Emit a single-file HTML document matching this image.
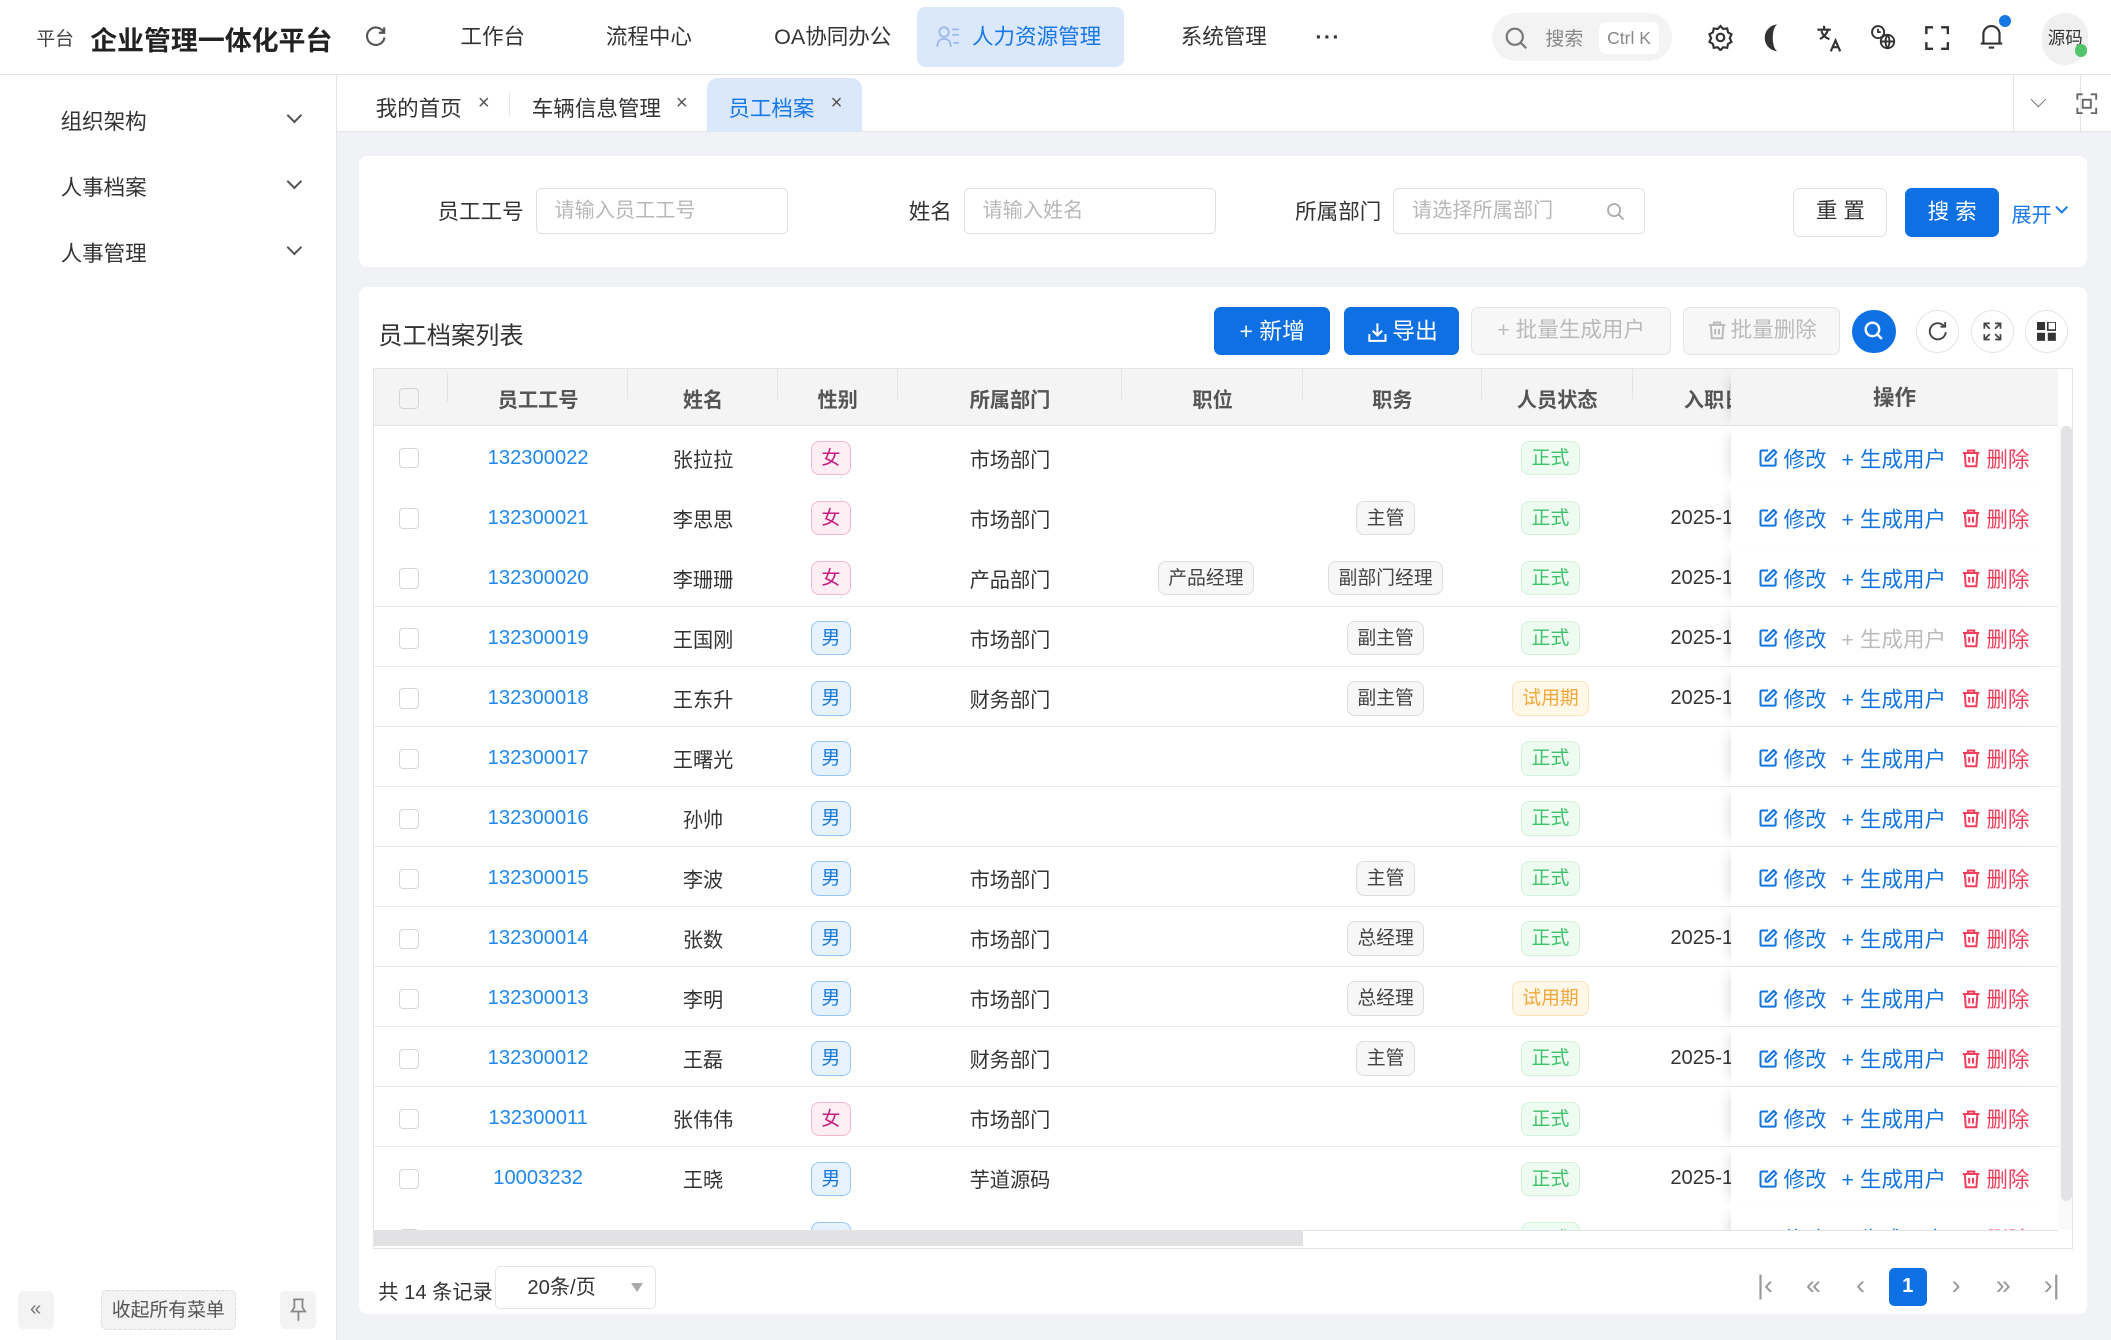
<!DOCTYPE html>
<html><head><meta charset="utf-8"><style>
*{box-sizing:border-box;margin:0;padding:0}
html,body{width:2111px;height:1340px;overflow:hidden;background:#fff}
#w{zoom:1.34630;width:1568px;height:995px;position:relative;font-family:"Liberation Sans","Noto Sans CJK SC",sans-serif;color:#333;font-size:15px;background:#f0f2f5}
.a{position:absolute}
.hdr{left:0;top:0;width:1568px;height:56px;background:#fff;border-bottom:1px solid #e4e4e4}
.side{left:0;top:56px;width:250px;height:939px;background:#fff;border-right:1px solid #e4e4e4}
.tabs{left:250px;top:56px;width:1318px;height:42px;background:#fff;border-bottom:1px solid #e6e6e6}
.nav{top:0;height:56px;line-height:56px;font-size:16px;color:#333}
.menu{left:45px;font-size:16px;color:#333}
.chev{position:absolute;left:215px;width:8px;height:8px;border-right:1.5px solid #555;border-bottom:1.5px solid #555;transform:rotate(45deg)}
.card{background:#fff;border-radius:6px}
.inp{height:34px;border:1px solid #dcdfe6;border-radius:4px;color:#b8b8b8;font-size:15px;line-height:32px;padding-left:13px}
.lbl{font-size:16px;color:#333;line-height:34px}
.btn{height:36px;border-radius:5px;line-height:36px;text-align:center;font-size:16px}
.row{position:absolute;left:0;width:1251px;height:45px;border-bottom:1px solid #e8e8e8;display:flex;align-items:center;background:#fff;padding-top:3px}
.c{flex:none;text-align:center}
.c0{width:55px;padding-right:3px}.c1{width:134px;color:#1e88ef}.c2{width:111px}.c3{width:89px;padding-right:10px}.c4{width:167px}.c5{width:134px;padding-right:10px}.c6{width:133px;padding-right:10px}.c7{width:112px;padding-right:10px}.c8{width:73px;text-align:left;padding-left:28px;overflow:hidden;white-space:nowrap}
.cb{display:inline-block;width:15px;height:15px;border:1px solid #d6d6d6;border-radius:3px;vertical-align:middle}
.tg{display:inline-block;font-size:14px;line-height:24px;padding:0 7px;border-radius:6px;border:1px solid #ddd;background:#f7f7f7;color:#444}
.f{border-color:#f8b7d1;background:#fdeef4;color:#c41d7f}
.m{border-color:#96c7f7;background:#e6f3ff;color:#1677d8}
.z{border-color:#d3f2dc;background:#eefbf1;color:#3fc26a}
.s{border-color:#fbe4b8;background:#fff8e8;color:#f1a73a}
.ops{position:absolute;left:1008px;top:0;width:243px;height:100%;display:flex;align-items:center;padding-left:20px;padding-top:3px;background:#fff;box-shadow:-8px 0 8px -6px rgba(0,0,0,.12);font-size:16px}
.ops span{margin-right:11px;color:#1474e0;display:flex;align-items:center}
.ops svg{margin-right:4px}
.ops .d{color:#f0405e;margin-right:0}
.ops .g{color:#bbb}
.hc{font-weight:bold;color:#555;position:relative}
.hc:after{content:"";position:absolute;right:0;top:-11px;height:22px;border-right:1px solid #e3e3e3}
.ib{width:32px;height:32px;border-radius:50%;border:1px solid #e4e4e4;background:#fff}
.pg{top:943px;font-size:20px;color:#999;width:24px;text-align:center}
</style></head><body>
<svg width="0" height="0" style="position:absolute">
<symbol id="ed" viewBox="0 0 16 16"><path d="M8 2H3a1 1 0 0 0-1 1v10a1 1 0 0 0 1 1h10a1 1 0 0 0 1-1V8" fill="none" stroke="currentColor" stroke-width="1.6"/><path d="M12.5 1.5l2 2L8 10H6V8z" fill="none" stroke="currentColor" stroke-width="1.6" stroke-linejoin="round"/></symbol>
<symbol id="tr" viewBox="0 0 16 16"><path d="M1.5 4h13M5.5 4V2h5v2M3 4l.8 10.5h8.4L13 4M6.5 7v4.5M9.5 7v4.5" fill="none" stroke="currentColor" stroke-width="1.6"/></symbol>
</svg>
<div id="w">
<!-- header -->
<div class="a hdr">
 <div class="a" style="left:27px;top:18px;font-size:14px;color:#444">平台</div>
 <div class="a" style="left:67px;top:14px;font-size:20px;font-weight:bold;color:#222">企业管理一体化平台</div>
 <svg class="a" style="left:270px;top:18px" width="18" height="18" viewBox="0 0 18 18" fill="none" stroke="#555" stroke-width="1.6"><path d="M14.5 6A6.5 6.5 0 1 0 15.2 10"/><path d="M15 2.5V6.5H11"/></svg>
 <div class="a nav" style="left:342px">工作台</div>
 <div class="a nav" style="left:450px">流程中心</div>
 <div class="a nav" style="left:575px">OA协同办公</div>
 <div class="a" style="left:681px;top:5px;width:154px;height:45px;background:#dbe8fb;border-radius:6px"></div>
 <svg class="a" style="left:695px;top:18px" width="18" height="20" viewBox="0 0 18 20" fill="none" stroke="#9bbbe6" stroke-width="1.4"><circle cx="6" cy="6" r="3.5"/><path d="M1 17c0-4 2-6 5-6s5 2 5 6"/><path d="M12 4h5M12 8h5M13 14h4"/></svg>
 <div class="a nav" style="left:722px;color:#1677e6">人力资源管理</div>
 <div class="a nav" style="left:877px">系统管理</div>
 <div class="a nav" style="left:977px;font-weight:bold;letter-spacing:1px">···</div>
 <div class="a" style="left:1108px;top:10px;width:134px;height:35px;border-radius:18px;background:#f3f3f3"></div>
 <svg class="a" style="left:1117px;top:19px" width="18" height="18" viewBox="0 0 18 18" fill="none" stroke="#777" stroke-width="1.6"><circle cx="8" cy="8" r="6"/><path d="M12.5 12.5L16.5 16.5"/></svg>
 <div class="a" style="left:1148px;top:18px;font-size:14px;color:#888">搜索</div>
 <div class="a" style="left:1188px;top:16px;width:44px;height:24px;background:#fff;border-radius:5px;font-size:13px;color:#888;text-align:center;line-height:24px">Ctrl K</div>
 <svg class="a" style="left:1268px;top:18px" width="20" height="20" viewBox="0 0 20 20" fill="none" stroke="#333" stroke-width="1.6"><path d="M10 1.5l2 2.2 3-.4.6 2.9 2.6 1.5-1.3 2.8 1.3 2.8-2.6 1.5-.6 2.9-3-.4-2 2.2-2-2.2-3 .4-.6-2.9-2.6-1.5 1.3-2.8L1.8 7.7l2.6-1.5.6-2.9 3 .4z"/><circle cx="10" cy="10" r="2.8"/></svg>
 <svg class="a" style="left:1309px;top:17px" width="18" height="22" viewBox="0 0 18 22"><path d="M12 1A10 10 0 0 0 12 21A4 10 0 0 1 12 1Z" fill="#333"/></svg>
 <svg class="a" style="left:1349px;top:17px" width="20" height="22" viewBox="0 0 20 22" fill="none" stroke="#333" stroke-width="1.6"><path d="M1 5h10M6 2v3M3 12c3-2 5-4 6-7M4 6c1 3 3 5 6 6"/><path d="M11 21l3.5-8 3.5 8M12.3 18h4.4"/></svg>
 <svg class="a" style="left:1389px;top:18px" width="20" height="20" viewBox="0 0 20 20" fill="none" stroke="#333" stroke-width="1.4"><circle cx="6" cy="6" r="4.5"/><path d="M6 3.5V6H8"/><circle cx="13" cy="13" r="5"/><path d="M8 13h10M13 8c-2 3-2 7 0 10M13 8c2 3 2 7 0 10"/></svg>
 <svg class="a" style="left:1430px;top:19px" width="18" height="18" viewBox="0 0 18 18" fill="none" stroke="#333" stroke-width="1.8"><path d="M1 6V1h5M12 1h5v5M17 12v5h-5M6 17H1v-5"/></svg>
 <svg class="a" style="left:1469px;top:16px" width="20" height="22" viewBox="0 0 20 22" fill="none" stroke="#333" stroke-width="1.6"><path d="M4 16V9a6 6 0 0 1 12 0v7H2h16"/><path d="M8 19h4"/></svg>
 <div class="a" style="left:1485px;top:11px;width:9px;height:9px;border-radius:50%;background:#1677e6"></div>
 <div class="a" style="left:1517px;top:10px;width:34px;height:38px;border-radius:17px;background:#f0f0f0;font-size:13px;line-height:38px;text-align:center;color:#333">源码</div>
 <div class="a" style="left:1541px;top:33px;width:9px;height:9px;border-radius:50%;background:#52c46c"></div>
</div>
<!-- sidebar -->
<div class="a side">
 <div class="a menu" style="top:22px">组织架构</div><div class="chev" style="top:26px"></div>
 <div class="a menu" style="top:71px">人事档案</div><div class="chev" style="top:75px"></div>
 <div class="a menu" style="top:120px">人事管理</div><div class="chev" style="top:124px"></div>
 <div class="a" style="left:13px;top:903px;width:27px;height:28px;border-radius:4px;background:#f3f3f3;color:#777;text-align:center;line-height:27px;font-size:15px">«</div>
 <div class="a" style="left:75px;top:902px;width:100px;height:30px;border-radius:4px;background:#f3f3f3;border:1px dashed #ddd;color:#555;text-align:center;line-height:28px;font-size:14px">收起所有菜单</div>
 <div class="a" style="left:208px;top:903px;width:27px;height:28px;border-radius:4px;background:#f3f3f3"></div>
 <svg class="a" style="left:215px;top:908px" width="14" height="18" viewBox="0 0 14 18" fill="none" stroke="#888" stroke-width="1.3"><path d="M3 1h8M4 1v6L2 10h10L10 7V1M7 10v7"/></svg>
</div>
<!-- tabs -->
<div class="a tabs">
 <div class="a" style="left:29px;top:12px;font-size:16px">我的首页</div><div class="a" style="left:105px;top:12px;font-size:15px;color:#555">×</div>
 <div class="a" style="left:128px;top:13px;height:17px;border-left:1px solid #e4e4e4"></div>
 <div class="a" style="left:145px;top:12px;font-size:16px">车辆信息管理</div><div class="a" style="left:252px;top:12px;font-size:15px;color:#555">×</div>
 <div class="a" style="left:275px;top:2px;width:115px;height:40px;background:#dbe8fb;border-radius:8px 8px 0 0"></div>
 <div class="a" style="left:291px;top:12px;font-size:16px;color:#1677e6">员工档案</div><div class="a" style="left:367px;top:12px;font-size:15px;color:#555">×</div>
 <div class="a" style="left:1245px;top:0;height:41px;border-left:1px solid #e4e4e4"></div>
 <div class="a" style="left:1295px;top:0;height:41px;border-left:1px solid #e4e4e4"></div>
 <div class="a" style="left:1260px;top:14px;width:8px;height:8px;border-right:1.3px solid #777;border-bottom:1.3px solid #777;transform:rotate(45deg)"></div>
 <svg class="a" style="left:1292px;top:13px" width="16" height="16" viewBox="0 0 16 16" fill="none" stroke="#666" stroke-width="1.4"><path d="M1 5V1h4M11 1h4v4M15 11v4h-4M5 15H1v-4"/><rect x="5" y="5" width="6" height="6"/></svg>
</div>
<!-- search card -->
<div class="a card" style="left:267px;top:116px;width:1283px;height:82px">
 <div class="a lbl" style="left:58px;top:25px">员工工号</div>
 <div class="a inp" style="left:131px;top:24px;width:187px;line-height:34px">请输入员工工号</div>
 <div class="a lbl" style="left:408px;top:25px">姓名</div>
 <div class="a inp" style="left:449px;top:24px;width:187px;line-height:34px">请输入姓名</div>
 <div class="a lbl" style="left:695px;top:25px">所属部门</div>
 <div class="a inp" style="left:768px;top:24px;width:187px;line-height:34px">请选择所属部门</div>
 <svg class="a" style="left:926px;top:34px" width="14" height="14" viewBox="0 0 14 14" fill="none" stroke="#aaa" stroke-width="1.3"><circle cx="6" cy="6" r="4.5"/><path d="M9.5 9.5L13 13"/></svg>
 <div class="a btn" style="left:1065px;top:24px;width:70px;border:1px solid #dcdfe6;color:#333;line-height:34px">重 置</div>
 <div class="a btn" style="left:1148px;top:24px;width:70px;background:#0f70e3;color:#fff">搜 索</div>
 <div class="a" style="left:1227px;top:32px;font-size:15px;color:#1677e6">展开</div>
 <div class="a" style="left:1261px;top:35px;width:7px;height:7px;border-right:1.5px solid #1677e6;border-bottom:1.5px solid #1677e6;transform:rotate(45deg)"></div>
</div>
<!-- table card -->
<div class="a card" style="left:267px;top:213px;width:1283px;height:763px">
 <div class="a" style="left:14px;top:22px;font-size:18px;color:#333">员工档案列表</div>
 <div class="a btn" style="left:635px;top:15px;width:86px;background:#0f70e3;color:#fff;font-size:17px">+ 新增</div>
 <div class="a btn" style="left:731px;top:15px;width:86px;background:#0f70e3;color:#fff;font-size:17px;padding-left:20px">导出</div>
 <svg class="a" style="left:749px;top:26px" width="14" height="15" viewBox="0 0 14 15" fill="none" stroke="#fff" stroke-width="1.5"><path d="M7 1v9M3.5 6.5L7 10l3.5-3.5M1 9v5h12V9"/></svg>
 <div class="a btn" style="left:826px;top:15px;width:148px;border:1px solid #e4e4e4;background:#f7f7f7;color:#bbb;line-height:34px;font-size:16px">+ 批量生成用户</div>
 <div class="a btn" style="left:983px;top:15px;width:117px;border:1px solid #e4e4e4;background:#f7f7f7;color:#bbb;line-height:34px;font-size:16px;padding-left:18px">批量删除</div>
 <svg class="a" style="left:1001px;top:25px;color:#bbb" width="15" height="15"><use href="#tr"/></svg>
 <div class="a ib" style="left:1109px;top:17px;background:#0f70e3;border-color:#0f70e3"></div>
 <svg class="a" style="left:1117px;top:25px" width="16" height="16" viewBox="0 0 16 16" fill="none" stroke="#fff" stroke-width="1.8"><circle cx="7" cy="7" r="5"/><path d="M10.5 10.5L14 14"/></svg>
 <div class="a ib" style="left:1156px;top:17px"></div>
 <svg class="a" style="left:1164px;top:25px" width="16" height="16" viewBox="0 0 16 16" fill="none" stroke="#444" stroke-width="1.4"><path d="M13 5A6 6 0 1 0 14 9"/><path d="M13.5 1.5V5H10"/></svg>
 <div class="a ib" style="left:1197px;top:17px"></div>
 <svg class="a" style="left:1206px;top:26px" width="14" height="14" viewBox="0 0 14 14" fill="none" stroke="#444" stroke-width="1.3"><path d="M1 5V1h4M1 1l4 4M13 5V1H9M13 1L9 5M1 9v4h4M1 13l4-4M13 9v4H9M13 13L9 9"/></svg>
 <div class="a ib" style="left:1237px;top:17px"></div>
 <svg class="a" style="left:1246px;top:26px" width="14" height="14" viewBox="0 0 14 14"><rect x="0" y="0" width="6" height="6" fill="#333"/><rect x="8" y="0" width="6" height="6" fill="none" stroke="#333" stroke-width="1.2"/><rect x="0" y="8" width="6" height="6" fill="#333"/><rect x="8" y="8" width="6" height="6" fill="#333"/></svg>

 <!-- table -->
 <div class="a" style="left:10px;top:60px;width:1263px;height:655px;border:1px solid #e4e4e4;overflow:hidden;background:#fff">
  <div class="a" style="left:0;top:0;width:1251px;height:43px;background:#f4f4f4;border-bottom:1px solid #e4e4e4;display:flex;align-items:center;font-size:15px;padding-top:2px">
   <div class="c c0 hc"><span class="cb" style="background:#f4f4f4"></span></div><div class="c c1 hc" style="color:#555">员工工号</div><div class="c c2 hc">姓名</div><div class="c c3 hc" style="padding-right:0">性别</div><div class="c c4 hc">所属部门</div><div class="c c5 hc" style="padding-right:0">职位</div><div class="c c6 hc" style="padding-right:0">职务</div><div class="c c7 hc" style="padding-right:0">人员状态</div><div class="c c8 hc" style="padding-left:38px">入职日</div>
   <div class="ops" style="background:#f4f4f4;justify-content:center;padding:0;font-weight:bold;color:#555">操作</div>
  </div>
  <div class="a" style="left:0;top:43px;width:1251px;height:597px;overflow:hidden">
   <div class="row" style="top:0"><div class="c c0"><span class="cb"></span></div><div class="c c1">132300022</div><div class="c c2">张拉拉</div><div class="c c3"><span class="tg f">女</span></div><div class="c c4">市场部门</div><div class="c c5"></div><div class="c c6"></div><div class="c c7"><span class="tg z">正式</span></div><div class="c c8"></div><div class="ops"><span><svg width="15" height="15"><use href="#ed"/></svg>修改</span><span>+ 生成用户</span><span class="d"><svg width="15" height="15"><use href="#tr"/></svg>删除</span></div></div>
   <div class="row" style="top:44.6px"><div class="c c0"><span class="cb"></span></div><div class="c c1">132300021</div><div class="c c2">李思思</div><div class="c c3"><span class="tg f">女</span></div><div class="c c4">市场部门</div><div class="c c5"></div><div class="c c6"><span class="tg">主管</span></div><div class="c c7"><span class="tg z">正式</span></div><div class="c c8">2025-1</div><div class="ops"><span><svg width="15" height="15"><use href="#ed"/></svg>修改</span><span>+ 生成用户</span><span class="d"><svg width="15" height="15"><use href="#tr"/></svg>删除</span></div></div>
   <div class="row" style="top:89.2px"><div class="c c0"><span class="cb"></span></div><div class="c c1">132300020</div><div class="c c2">李珊珊</div><div class="c c3"><span class="tg f">女</span></div><div class="c c4">产品部门</div><div class="c c5"><span class="tg">产品经理</span></div><div class="c c6"><span class="tg">副部门经理</span></div><div class="c c7"><span class="tg z">正式</span></div><div class="c c8">2025-1</div><div class="ops"><span><svg width="15" height="15"><use href="#ed"/></svg>修改</span><span>+ 生成用户</span><span class="d"><svg width="15" height="15"><use href="#tr"/></svg>删除</span></div></div>
   <div class="row" style="top:133.8px"><div class="c c0"><span class="cb"></span></div><div class="c c1">132300019</div><div class="c c2">王国刚</div><div class="c c3"><span class="tg m">男</span></div><div class="c c4">市场部门</div><div class="c c5"></div><div class="c c6"><span class="tg">副主管</span></div><div class="c c7"><span class="tg z">正式</span></div><div class="c c8">2025-1</div><div class="ops"><span><svg width="15" height="15"><use href="#ed"/></svg>修改</span><span class="g">+ 生成用户</span><span class="d"><svg width="15" height="15"><use href="#tr"/></svg>删除</span></div></div>
   <div class="row" style="top:178.4px"><div class="c c0"><span class="cb"></span></div><div class="c c1">132300018</div><div class="c c2">王东升</div><div class="c c3"><span class="tg m">男</span></div><div class="c c4">财务部门</div><div class="c c5"></div><div class="c c6"><span class="tg">副主管</span></div><div class="c c7"><span class="tg s">试用期</span></div><div class="c c8">2025-1</div><div class="ops"><span><svg width="15" height="15"><use href="#ed"/></svg>修改</span><span>+ 生成用户</span><span class="d"><svg width="15" height="15"><use href="#tr"/></svg>删除</span></div></div>
   <div class="row" style="top:223px"><div class="c c0"><span class="cb"></span></div><div class="c c1">132300017</div><div class="c c2">王曙光</div><div class="c c3"><span class="tg m">男</span></div><div class="c c4"></div><div class="c c5"></div><div class="c c6"></div><div class="c c7"><span class="tg z">正式</span></div><div class="c c8"></div><div class="ops"><span><svg width="15" height="15"><use href="#ed"/></svg>修改</span><span>+ 生成用户</span><span class="d"><svg width="15" height="15"><use href="#tr"/></svg>删除</span></div></div>
   <div class="row" style="top:267.6px"><div class="c c0"><span class="cb"></span></div><div class="c c1">132300016</div><div class="c c2">孙帅</div><div class="c c3"><span class="tg m">男</span></div><div class="c c4"></div><div class="c c5"></div><div class="c c6"></div><div class="c c7"><span class="tg z">正式</span></div><div class="c c8"></div><div class="ops"><span><svg width="15" height="15"><use href="#ed"/></svg>修改</span><span>+ 生成用户</span><span class="d"><svg width="15" height="15"><use href="#tr"/></svg>删除</span></div></div>
   <div class="row" style="top:312.2px"><div class="c c0"><span class="cb"></span></div><div class="c c1">132300015</div><div class="c c2">李波</div><div class="c c3"><span class="tg m">男</span></div><div class="c c4">市场部门</div><div class="c c5"></div><div class="c c6"><span class="tg">主管</span></div><div class="c c7"><span class="tg z">正式</span></div><div class="c c8"></div><div class="ops"><span><svg width="15" height="15"><use href="#ed"/></svg>修改</span><span>+ 生成用户</span><span class="d"><svg width="15" height="15"><use href="#tr"/></svg>删除</span></div></div>
   <div class="row" style="top:356.8px"><div class="c c0"><span class="cb"></span></div><div class="c c1">132300014</div><div class="c c2">张数</div><div class="c c3"><span class="tg m">男</span></div><div class="c c4">市场部门</div><div class="c c5"></div><div class="c c6"><span class="tg">总经理</span></div><div class="c c7"><span class="tg z">正式</span></div><div class="c c8">2025-1</div><div class="ops"><span><svg width="15" height="15"><use href="#ed"/></svg>修改</span><span>+ 生成用户</span><span class="d"><svg width="15" height="15"><use href="#tr"/></svg>删除</span></div></div>
   <div class="row" style="top:401.4px"><div class="c c0"><span class="cb"></span></div><div class="c c1">132300013</div><div class="c c2">李明</div><div class="c c3"><span class="tg m">男</span></div><div class="c c4">市场部门</div><div class="c c5"></div><div class="c c6"><span class="tg">总经理</span></div><div class="c c7"><span class="tg s">试用期</span></div><div class="c c8"></div><div class="ops"><span><svg width="15" height="15"><use href="#ed"/></svg>修改</span><span>+ 生成用户</span><span class="d"><svg width="15" height="15"><use href="#tr"/></svg>删除</span></div></div>
   <div class="row" style="top:446px"><div class="c c0"><span class="cb"></span></div><div class="c c1">132300012</div><div class="c c2">王磊</div><div class="c c3"><span class="tg m">男</span></div><div class="c c4">财务部门</div><div class="c c5"></div><div class="c c6"><span class="tg">主管</span></div><div class="c c7"><span class="tg z">正式</span></div><div class="c c8">2025-1</div><div class="ops"><span><svg width="15" height="15"><use href="#ed"/></svg>修改</span><span>+ 生成用户</span><span class="d"><svg width="15" height="15"><use href="#tr"/></svg>删除</span></div></div>
   <div class="row" style="top:490.6px"><div class="c c0"><span class="cb"></span></div><div class="c c1">132300011</div><div class="c c2">张伟伟</div><div class="c c3"><span class="tg f">女</span></div><div class="c c4">市场部门</div><div class="c c5"></div><div class="c c6"></div><div class="c c7"><span class="tg z">正式</span></div><div class="c c8"></div><div class="ops"><span><svg width="15" height="15"><use href="#ed"/></svg>修改</span><span>+ 生成用户</span><span class="d"><svg width="15" height="15"><use href="#tr"/></svg>删除</span></div></div>
   <div class="row" style="top:535.2px"><div class="c c0"><span class="cb"></span></div><div class="c c1">10003232</div><div class="c c2">王晓</div><div class="c c3"><span class="tg m">男</span></div><div class="c c4">芋道源码</div><div class="c c5"></div><div class="c c6"></div><div class="c c7"><span class="tg z">正式</span></div><div class="c c8">2025-1</div><div class="ops"><span><svg width="15" height="15"><use href="#ed"/></svg>修改</span><span>+ 生成用户</span><span class="d"><svg width="15" height="15"><use href="#tr"/></svg>删除</span></div></div>
   <div class="row" style="top:579.8px"><div class="c c0"><span class="cb"></span></div><div class="c c1">10003231</div><div class="c c2">张三</div><div class="c c3"><span class="tg m">男</span></div><div class="c c4"></div><div class="c c5"></div><div class="c c6"></div><div class="c c7"><span class="tg z">正式</span></div><div class="c c8">2025-1</div><div class="ops"><span><svg width="15" height="15"><use href="#ed"/></svg>修改</span><span>+ 生成用户</span><span class="d"><svg width="15" height="15"><use href="#tr"/></svg>删除</span></div></div>
  </div>
  <div class="a" style="left:1251px;top:43px;width:11px;height:597px;background:#fafafa"></div>
  <div class="a" style="left:1253px;top:43px;width:8px;height:575px;border-radius:4px;background:#e3e3e5"></div>
  <div class="a" style="left:0;top:640px;width:1251px;height:14px;border-top:1px solid #e4e4e4;background:#fff"></div>
  <div class="a" style="left:0;top:641px;width:690px;height:11px;background:#e2e2e4"></div>
 </div>
 <!-- pagination -->
 <div class="a" style="left:14px;top:735px;font-size:15px;color:#333">共 14 条记录</div>
 <div class="a" style="left:101px;top:727px;width:119px;height:32px;border:1px solid #e4e4e4;border-radius:4px;font-size:15px;line-height:32px;padding-left:23px">20条/页</div>
 <div class="a" style="left:202px;top:740px;width:0;height:0;border-left:5px solid transparent;border-right:5px solid transparent;border-top:7px solid #aaa"></div>
</div>
<div class="a pg" style="left:1299px">|‹</div>
<div class="a pg" style="left:1335px">«</div>
<div class="a pg" style="left:1370px">‹</div>
<div class="a" style="left:1403px;top:942px;width:28px;height:28px;border-radius:4px;background:#0f70e3;color:#fff;font-weight:bold;text-align:center;line-height:28px;font-size:15px">1</div>
<div class="a pg" style="left:1441px">›</div>
<div class="a pg" style="left:1476px">»</div>
<div class="a pg" style="left:1512px">›|</div>
</div></body></html>
